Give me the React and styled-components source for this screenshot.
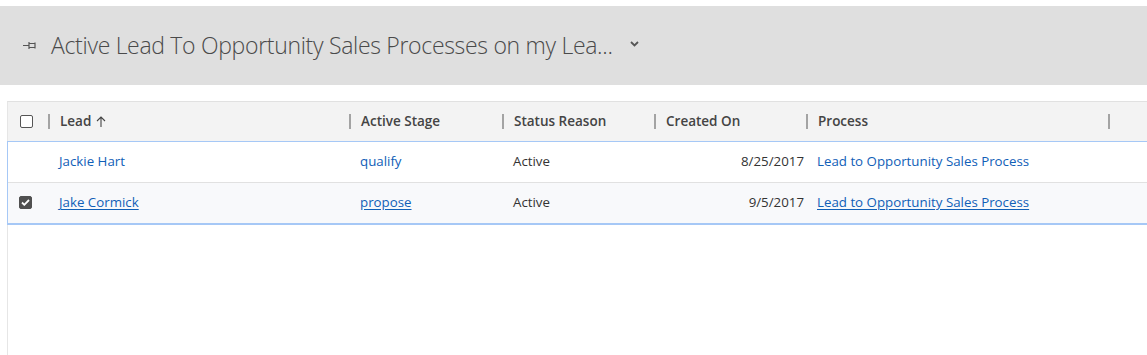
import React from 'react'
import styled, { createGlobalStyle } from 'styled-components'

const GlobalStyle = createGlobalStyle`
  html, body {
    margin: 0;
    padding: 0;
    background: #fff;
    font-family: "Segoe UI", "Open Sans", "Liberation Sans", sans-serif;
    overflow: hidden;
  }
`

const columns = [
  { key: 'lead', title: 'Lead', width: 301, sort: true },
  { key: 'stage', title: 'Active Stage', width: 153 },
  { key: 'status', title: 'Status Reason', width: 152 },
  { key: 'created', title: 'Created On', width: 152, right: true },
  { key: 'process', title: 'Process', width: 302 },
]

const rows = [
  { lead: 'Jackie Hart', stage: 'qualify', status: 'Active', created: '8/25/2017', process: 'Lead to Opportunity Sales Process' },
  { lead: 'Jake Cormick', stage: 'propose', status: 'Active', created: '9/5/2017', process: 'Lead to Opportunity Sales Process', selected: true },
]

const linkCols = ['lead', 'stage', 'process']
const gridCols = `40px ${columns.map(c => c.width + 'px').join(' ')} 1fr`

const Page = styled.div`
  padding-top: 6px;
  height: 349px;
  display: flex;
  flex-direction: column;
`

const TitleBar = styled.div`
  height: 79px;
  background: #dfdfdf;
  display: flex;
  align-items: center;
  padding-left: 23px;
  flex-shrink: 0;
`

const Title = styled.h1`
  margin: 0 0 0 13px;
  font-family: "Segoe UI Light", "Open Sans", sans-serif;
  font-weight: 300;
  font-size: 23px;
  color: #4a4a4a;
  letter-spacing: -0.31px;
  padding-bottom: 2px;
`

const Chevron = styled.svg`
  margin-left: 17px;
  margin-bottom: 3px;
`

const Grid = styled.div`
  margin: 16px 0 0 7px;
  border-left: 1px solid #e6e6e6;
  border-top: 1px solid #e1e1e1;
  flex: 1;
`

const HeaderRow = styled.div`
  display: grid;
  grid-template-columns: ${gridCols};
  height: 39px;
  background: #f3f3f3;
`

const Body = styled.div`
  border-top: 1px solid #a6c8f6;
  border-bottom: 2px solid #a6c8f6;
  border-left: 1px solid #a6c8f6;
  margin-left: -1px;
`

const Row = styled.div`
  display: grid;
  grid-template-columns: ${gridCols};
  height: 40px;
  background: ${p => (p.$alt ? '#f8f9fb' : '#fff')};
  border-top: ${p => (p.$first ? 'none' : '1px solid #e1e1e1')};
`

const HeadCell = styled.div`
  display: flex;
  align-items: center;
  font-size: 13.5px;
  font-weight: 600;
  color: #444;
  padding-left: ${p => (p.$check ? '12px' : '0')};
  padding-bottom: 1px;

  &::before {
    content: ${p => (p.$check ? 'none' : "''")};
    width: 2px;
    height: 15px;
    background: #a3a3a3;
    margin-right: 10px;
    margin-top: 1px;
  }
`

const Cell = styled.div`
  display: flex;
  align-items: center;
  justify-content: ${p => (p.$right ? 'flex-end' : 'flex-start')};
  padding: ${p => (p.$check ? '0 0 0 12px' : p.$right ? '0 2px 0 0' : '0 0 0 11px')};
  padding-bottom: 2px;
  font-size: 13.3px;
  color: #333;
  white-space: nowrap;
  margin-left: ${p => (p.$check ? '-1px' : '0')};
`

const CellLink = styled.a`
  color: #1160b7;
  text-decoration: ${p => (p.$under ? 'underline' : 'none')};
  text-underline-offset: 2px;
  cursor: pointer;
`

const Box = styled.span`
  width: 13px;
  height: 13px;
  box-sizing: border-box;
  border-radius: 2px;
  border: 1px solid ${p => (p.$checked ? '#505050' : '#555')};
  background: ${p => (p.$checked ? '#505050' : '#fff')};
  display: flex;
  align-items: center;
  justify-content: center;
`

const SortArrow = styled.svg`
  margin-left: 5px;
`

const Pin = () => (
  <svg width="15" height="9" viewBox="0 0 15 9">
    <path d="M0 4.5h5.5M6 1v7M6 2.5h6v4h-6M12 1.5v6" stroke="#555" strokeWidth="1.2" fill="none" />
  </svg>
)

const Check = () => (
  <svg width="9" height="7" viewBox="0 0 9 7">
    <path d="M1 3.5l2.3 2.3L8 1" stroke="#fff" strokeWidth="1.8" fill="none" />
  </svg>
)

const App = () => (
  <Page>
    <GlobalStyle />
    <TitleBar>
      <Pin />
      <Title>Active Lead To Opportunity Sales Processes on my Lea...</Title>
      <Chevron width="9" height="6" viewBox="0 0 9 6">
        <path d="M1 1l3.5 3.5L8 1" stroke="#555" strokeWidth="1.8" fill="none" />
      </Chevron>
    </TitleBar>
    <Grid>
      <HeaderRow>
        <HeadCell $check>
          <Box />
        </HeadCell>
        {columns.map(c => (
          <HeadCell key={c.key}>
            {c.title}
            {c.sort && (
              <SortArrow width="10" height="11" viewBox="0 0 10 11">
                <path d="M5 11V1M1 5l4-4 4 4" stroke="#444" strokeWidth="1.1" fill="none" />
              </SortArrow>
            )}
          </HeadCell>
        ))}
        <HeadCell />
      </HeaderRow>
      <Body>
        {rows.map((r, i) => (
          <Row key={i} $first={i === 0} $alt={r.selected}>
            <Cell $check>{r.selected && <Box $checked><Check /></Box>}</Cell>
            {columns.map(c => (
              <Cell key={c.key} $right={c.right}>
                {linkCols.includes(c.key) ? (
                  <CellLink $under={r.selected}>{r[c.key]}</CellLink>
                ) : (
                  r[c.key]
                )}
              </Cell>
            ))}
            <Cell />
          </Row>
        ))}
      </Body>
    </Grid>
  </Page>
)

export default App
